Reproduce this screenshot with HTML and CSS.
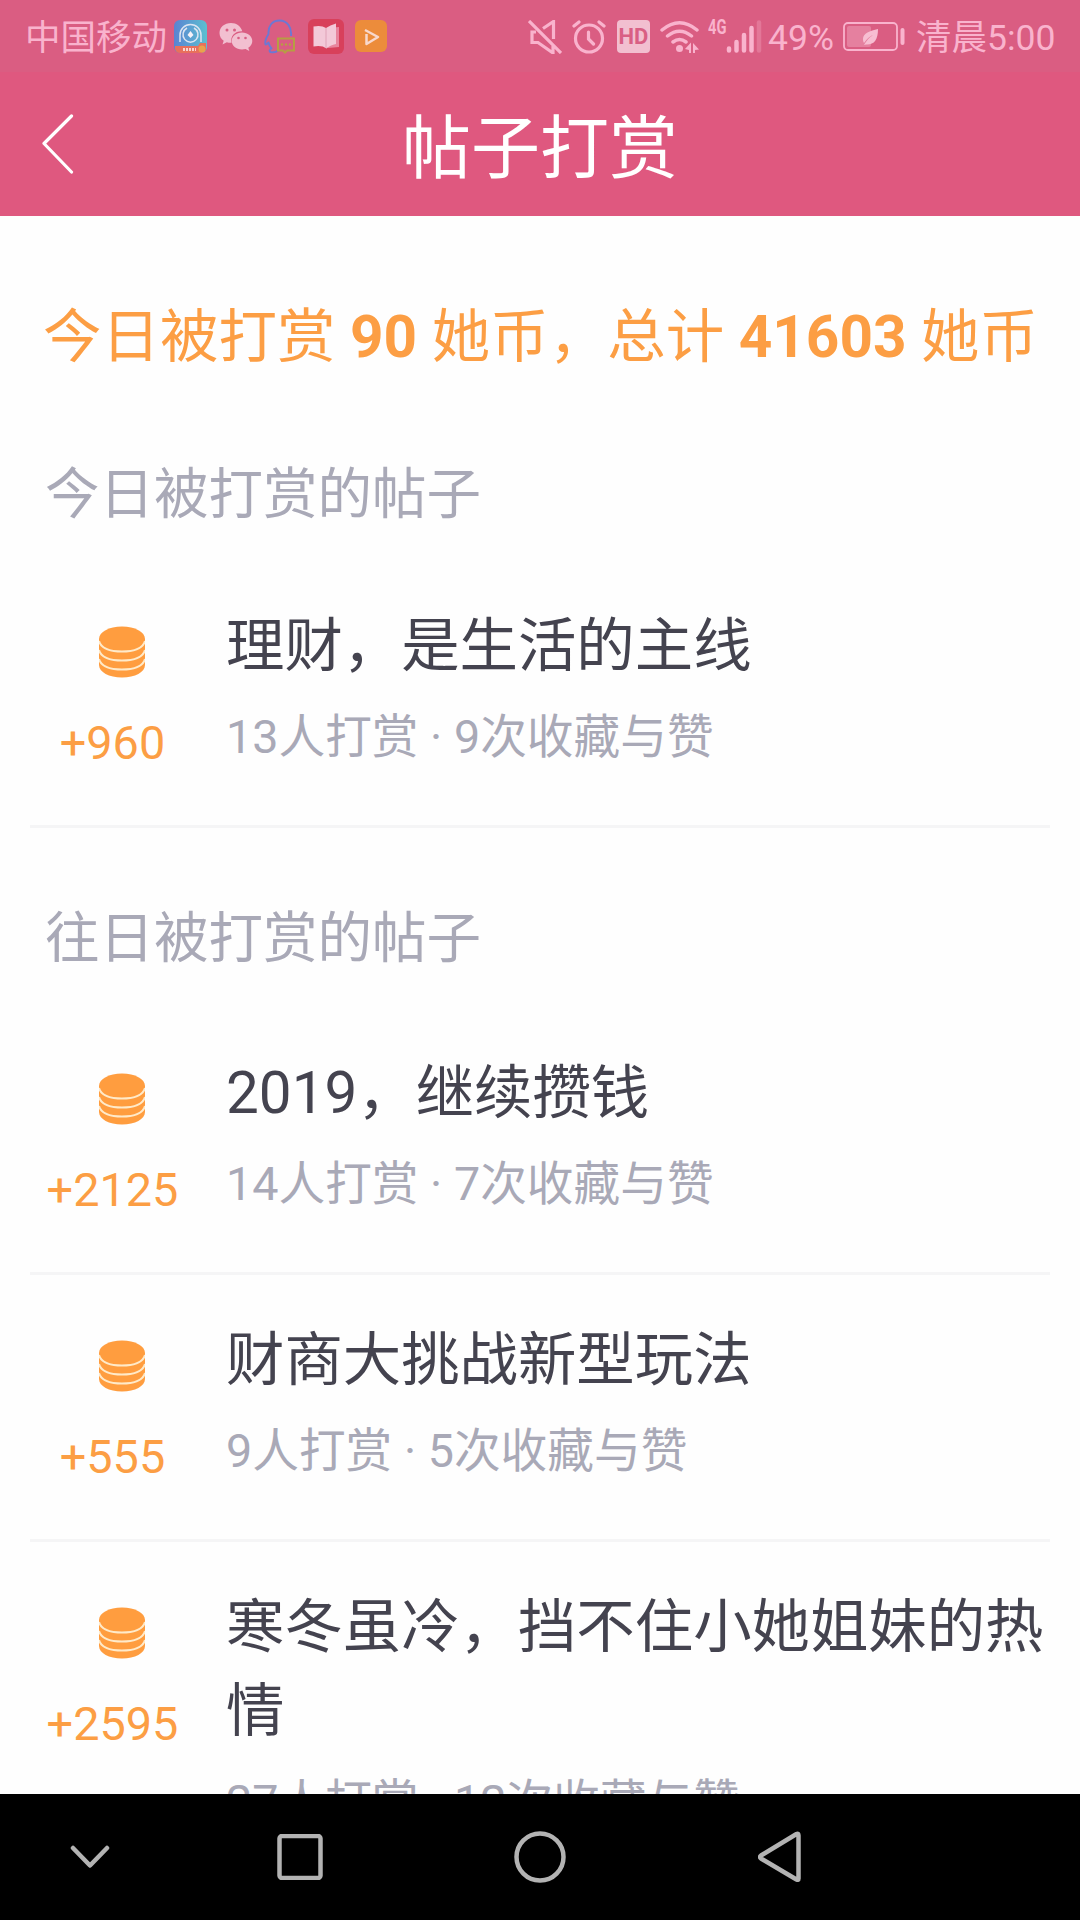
FILE: index.html
```html
<!DOCTYPE html>
<html lang="zh-CN">
<head>
	<meta charset="utf-8"/>
	<title>帖子打赏</title>
	<link rel="stylesheet" href="styles.css">
</head>
<body>
	<!-- 图标复用 -->
	<svg class="defs" width="0" height="0">
		<symbol id="coins" viewBox="0 0 46 52">
			<path fill="#ff9d3f" d="M0 13C0 6 10 .5 23 .5S46 6 46 13v26c0 7-10 12.500-23 12.500S0 46 0 39z"/>
			<path fill="none" stroke="#ffeac9" stroke-width="2" d="M0 15c2 7 11 10.500 23 10.500S44 22 46 15M0 24c2 7 11 10.500 23 10.500S44 31 46 24M0 33c2 7 11 10.500 23 10.500S44 40 46 33"/>
		</symbol>
	</svg>

	<div class="header">
		<div class="status">
			<span class="carrier">中国移动</span>
			<div class="apps">
				<svg width="33" height="33" viewBox="0 0 33 33">
					<defs>
						<linearGradient id="g1" x1="0" y1="0" x2="1" y2="0"><stop offset="0" stop-color="#5a83d2"/><stop offset="1" stop-color="#5dbfd0"/></linearGradient>
					</defs>
					<rect width="33" height="33" rx="6" fill="url(#g1)"/>
					<g fill="none" stroke="#dbe4f2" stroke-width="1.500">
						<path d="M6 22v-7a10.500 10.500 0 0 1 21 0v7"/>
						<path d="M13 8a7.500 7.500 0 1 0 7 0"/>
					</g>
					<path fill="#f5f1f8" d="M16.500 11l3 4-3 3-3-3z"/>
					<path fill="#e8705c" d="M1 26h23l2-3h6v7l-4 3H6q-4 0-5-4z"/>
					<circle cx="28" cy="29" r="3.500" fill="#eaa24c"/>
					<path stroke="#f8d4d0" stroke-width="3" stroke-dasharray="2 1" d="M9 29.500h13"/>
				</svg>
				<svg width="34" height="30" viewBox="0 0 34 30">
					<path fill="#f2bfd0" d="M12 1C5.500 1 .5 5.300.5 11c0 3.200 1.600 6 4.200 7.800L3.500 22.500l4.300-2.200c1.500.4 3 .6 4.700.5C11 14 16 9 23.300 9.300 22 4.400 17.500 1 12 1z"/>
					<path fill="#f2bfd0" d="M23 10.500c-5.800 0-10.300 3.700-10.300 8.500s4.500 8.500 10.300 8.500c1.300 0 2.500-.2 3.600-.5l3.700 2-1-3.200c2.500-1.700 4-4 4-6.800 0-4.800-4.500-8.500-10.300-8.500z"/>
					<g fill="#d95f84"><circle cx="8" cy="8" r="1.500"/><circle cx="15.500" cy="8" r="1.500"/><circle cx="19.500" cy="16" r="1.300"/><circle cx="26.500" cy="16" r="1.300"/></g>
				</svg>
				<svg width="32" height="35" viewBox="0 0 32 35">
					<path fill="none" stroke="#6c78d3" stroke-width="1.900" stroke-linejoin="round" d="M27 17c1-9-4-15.500-11.500-15.500C8 1.500 4 7 4.500 15 2 19 .5 22 1.500 25.500c1 .5 2-1 3-2 .5 3 1.500 4.500 3 6-2 1-2.500 3-1 3.500 2.500.5 6 0 7.500-1.500"/>
					<path fill="none" stroke="#b69e43" stroke-width="2" d="M14 19.500h16v12h-7l-2 2-2-2h-5z"/>
					<g fill="#b69e43"><circle cx="18" cy="25.500" r="1.200"/><circle cx="22" cy="25.500" r="1.200"/><circle cx="26" cy="25.500" r="1.200"/></g>
				</svg>
				<svg width="36" height="35" viewBox="0 0 36 35">
					<rect width="36" height="35" rx="6" fill="#d8405b"/>
					<path fill="#e8849d" d="M20 9l11-1v20l-11 1z"/>
					<path fill="#f3c9d8" d="M5.500 7.500q8-1.500 12.500 1.500 4-3 10-4.500V25q-6 1-9.500 4.500Q14 26 5.500 27.500z"/>
					<path stroke="#dfa2b7" d="M18 9v20"/>
				</svg>
				<svg width="32" height="33" viewBox="0 0 32 33">
					<rect width="32" height="32" rx="6" fill="#ec8c3b"/>
					<path fill="none" stroke="#f8d8cc" stroke-width="2.500" stroke-linejoin="round" d="M11.500 14v10L23 17 10 10"/>
				</svg>
			</div>
			<div class="signals">
				<!-- 静音 -->
				<svg class="mute" width="34" height="34" viewBox="0 0 34 34">
					<path fill="none" stroke="#f9b3cd" stroke-width="3.200" d="M1 1l32 32M15 8.500L25.500 1.500V19M8 12H4v10.500h6L25 33v-7"/>
				</svg>
				<!-- 闹钟 -->
				<svg class="alarm" width="34" height="34" viewBox="0 0 34 34">
					<g fill="none" stroke="#f9b3cd" stroke-width="3.200" stroke-linecap="round">
						<circle cx="17" cy="18.500" r="13.500"/>
						<path d="M2 6l5-4M32 6l-5-4M16.500 12v7l5 5"/>
					</g>
				</svg>
				<span class="hd">HD</span>
				<!-- wifi -->
				<svg class="wifi" width="40" height="34" viewBox="0 0 40 34">
					<g fill="none" stroke="#f9b3cd" stroke-width="3.500" stroke-linecap="round">
						<path d="M2 10q17.500-14.500 35 0M7.500 16q12-9.500 24 0M13 22q6.500-5 13 0"/>
					</g>
					<circle cx="19.500" cy="28.500" r="3.500" fill="#f9b3cd"/>
					<path fill="#f9b3cd" d="M25 29l6-6.500V33h-2v-3zM33 23l6 6.500-4 .5v3h-2z"/>
				</svg>
				<span class="net">4G</span>
				<svg class="bars" width="36" height="34" viewBox="0 0 36 34">
					<g stroke="#f9b3cd" stroke-width="4.500" stroke-linecap="round">
						<path d="M3 28.500v2M10.500 22v8.500M18 15v15.500M25.500 8v22.500"/>
						<path opacity=".3" d="M33 2.500v28"/>
					</g>
				</svg>
				<span class="percent">49%</span>
				<svg class="battery" width="62" height="30" viewBox="0 0 62 30">
					<rect x="1" y="1" width="53" height="27" rx="4" fill="none" stroke="#f9b3cd" stroke-width="1.800"/>
					<rect x="4" y="4" width="24" height="21" rx="2" fill="#e5809f"/>
					<path fill="#f7bed2" d="M35 7C27 9 20 11 20 17c0 2 .5 3 1 4q4-6 9-8-5 3-9 10l2-.5C31 23 35 18 35 7z"/>
					<rect x="57.500" y="6" width="4" height="17" rx="2" fill="#f9b3cd"/>
				</svg>
				<span class="time">清晨5:00</span>
			</div>
		</div>
		<div class="navbar">
			<svg class="back" width="32" height="60" viewBox="0 0 32 60">
				<path fill="none" stroke="#fff" stroke-width="3.200" stroke-linecap="round" stroke-linejoin="round" d="M29.500 2L2 29.500 29.500 58"/>
			</svg>
			<h1>帖子打赏</h1>
		</div>
	</div>

	<div class="content">
		<p class="total">今日被打赏 <b>90</b> 她币，总计 <b>41603</b> 她币</p>

		<h2 class="today">今日被打赏的帖子</h2>
		<ul class="list">
			<li>
				<div class="coin">
					<svg><use href="#coins"/></svg>
					<span>+960</span>
				</div>
				<div class="post">
					<h3>理财，是生活的主线</h3>
					<p>13人打赏 · 9次收藏与赞</p>
				</div>
			</li>
		</ul>

		<h2 class="before">往日被打赏的帖子</h2>
		<ul class="list">
			<li>
				<div class="coin">
					<svg><use href="#coins"/></svg>
					<span>+2125</span>
				</div>
				<div class="post">
					<h3>2019，继续攒钱</h3>
					<p>14人打赏 · 7次收藏与赞</p>
				</div>
			</li>
			<li>
				<div class="coin">
					<svg><use href="#coins"/></svg>
					<span>+555</span>
				</div>
				<div class="post">
					<h3>财商大挑战新型玩法</h3>
					<p>9人打赏 · 5次收藏与赞</p>
				</div>
			</li>
			<li>
				<div class="coin">
					<svg><use href="#coins"/></svg>
					<span>+2595</span>
				</div>
				<div class="post">
					<h3>寒冬虽冷，挡不住小她姐妹的热情</h3>
					<p>27人打赏 · 12次收藏与赞</p>
				</div>
			</li>
		</ul>
	</div>

	<!-- 系统导航键 -->
	<div class="keys">
		<div class="hide">
			<svg width="40" height="24" viewBox="0 0 40 24"><path d="M3 3l17 17.500L37 3"/></svg>
		</div>
		<div>
			<svg width="46" height="46" viewBox="0 0 46 46"><rect x="2.500" y="2" width="41" height="42" rx="2.500"/></svg>
		</div>
		<div>
			<svg width="52" height="52" viewBox="0 0 52 52"><circle cx="26" cy="26" r="23.500"/></svg>
		</div>
		<div>
			<svg width="44" height="52" viewBox="0 0 44 52"><path d="M40.500 4.500v43q0 2-2 1L3 27.500q-2-1.500 0-3L38.500 3q2-1 2 1.500z"/></svg>
		</div>
	</div>
</body>
</html>
```
FILE: styles.css
```css
*{margin: 0;padding: 0;box-sizing: border-box;}
ul{list-style-type: none;}
h1,h2,h3{font-weight: normal;}
svg{display: block;flex: none;}
body{
	height: 1920px;
	overflow: hidden;
	display: flex;
	flex-direction: column;
	background: #fefefe;
	font-family: Roboto, "Noto Sans CJK SC", sans-serif;
}
.defs{
	position: absolute;
}

/* 头部 */
.header{
	flex: none;
	height: 216px;
	background: #df587f;
	color: #fff;
}
.status{
	height: 72px;
	padding: 1px 25px 0 25px;
	display: flex;
	align-items: center;
	background: #da5d82;
	color: #f9b3cd;
	font-size: 35.5px;
	line-height: 72px;
	white-space: nowrap;
}
.carrier{
	width: 149px;
	padding-top: 2px;
}
.apps{
	display: flex;
	align-items: center;
	gap: 11.5px;
}
.signals{
	display: flex;
	align-items: center;
	margin-left: auto;
}
.mute{
	margin-right: 10px;
}
.hd{
	width: 33px;
	height: 33px;
	margin-left: 11px;
	border-radius: 4px;
	background: #f2bfd0;
	color: #d95f84;
	font-size: 22px;
	font-weight: bold;
	line-height: 34px;
	text-align: center;
}
.wifi{
	margin-left: 10px;
}
.net{
	width: 18px;
	margin: 17px 0 0 8px;
	align-self: flex-start;
	font-size: 21px;
	font-weight: bold;
	line-height: 20px;
	transform: scaleX(.7);
	transform-origin: 0 0;
}
.percent{
	width: 65px;
	margin-left: 6px;
	padding-top: 2px;
}
.battery{
	margin-left: 10px;
}
.time{
	width: 139px;
	margin-left: 11px;
	padding-top: 2px;
}
.navbar{
	height: 144px;
	display: grid;
	grid-template-columns: 120px 1fr 120px;
	align-items: center;
}
.back{
	margin-left: 42px;
}
.navbar h1{
	padding-top: 12px;
	font-size: 69px;
	line-height: 132px;
	text-align: center;
}

/* 内容 */
.content{
	flex: 1;
	min-height: 0;
	overflow: hidden;
}
.total{
	padding: 79px 0 0 43px;
	color: #fc9e44;
	font-size: 58.5px;
	line-height: 84px;
	white-space: nowrap;
}
.content h2{
	padding-left: 45px;
	color: #a9a9b7;
	font-size: 54.5px;
	line-height: 80px;
}
.today{
	margin: 75px 0 27px;
}
.before{
	margin: 70px 0 30px;
}
.list li{
	display: flex;
	margin: 0 30px;
	padding: 43px 0 54px;
	border-bottom: 3px solid #f5f5f6;
}
.coin{
	width: 165px;
	margin-right: 31px;
	padding-top: 22px;
	color: #fc9e44;
	font-size: 46.8px;
	text-align: center;
}
.coin svg{
	width: 46px;
	height: 52px;
	margin: 0 0 38px 69px;
}
.coin span{
	display: block;
	line-height: 54px;
}
.post{
	flex: 1;
	margin-right: -10px;
}
.post h3{
	color: #44434f;
	font-size: 58.4px;
	line-height: 84px;
}
.post p{
	margin-top: 15px;
	color: #a9a9b7;
	font-size: 46.7px;
	line-height: 68px;
}

/* 底部按键 */
.keys{
	flex: none;
	height: 126px;
	display: flex;
	align-items: center;
	background: #000;
}
.keys div{
	width: 240px;
	display: flex;
	justify-content: center;
}
.keys .hide{
	width: 180px;
}
.keys svg{
	fill: none;
	stroke: #b3b3b3;
	stroke-width: 4.5px;
	stroke-linecap: round;
	stroke-linejoin: round;
}
```
